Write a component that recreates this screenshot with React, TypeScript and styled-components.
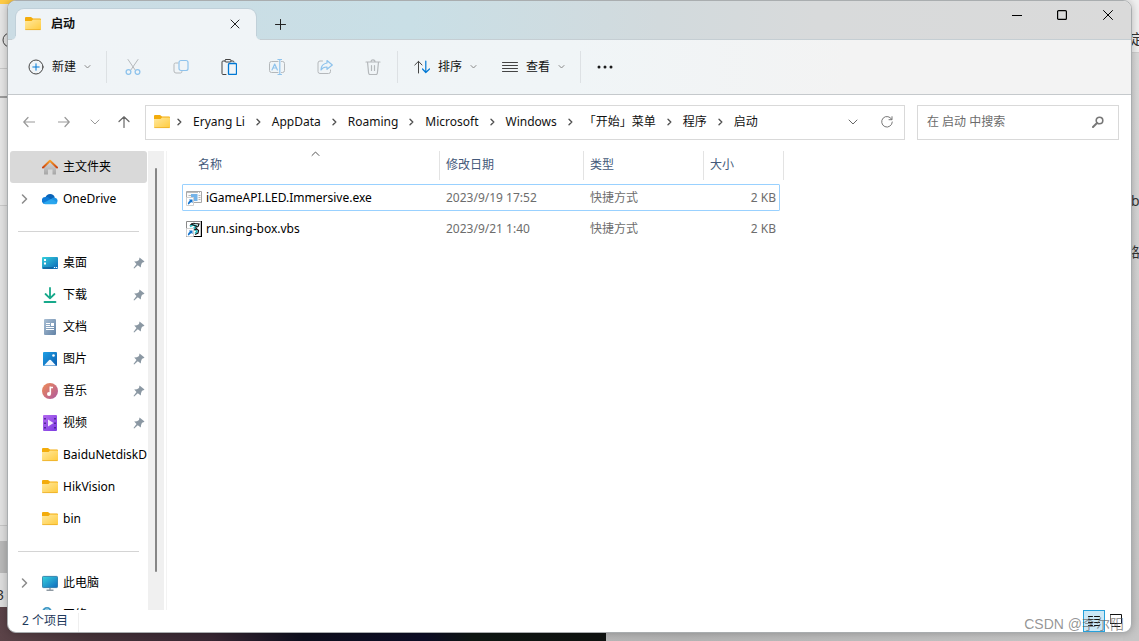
import React from "react";
import styled, { createGlobalStyle, css } from "styled-components";

const GlobalStyle = createGlobalStyle`
  * { box-sizing: border-box; }
  html, body { margin: 0; padding: 0; height: 100%; overflow: hidden; }
  body, button, input, table {
    font-family: "Noto Sans", "Noto Sans CJK SC", sans-serif;
    font-size: 12px;
    line-height: 16px;
    color: #111;
  }
  button { margin: 0; padding: 0; border: 0; background: none; white-space: nowrap; }
  a { color: inherit; text-decoration: none; }
  svg { display: block; flex: none; }
`;

/* ---------- desktop behind the window ---------- */

const Desktop = styled.div`
  position: relative;
  height: 100vh;
  padding: 0 7px 8px;
  overflow: hidden;
  background: linear-gradient(90deg, #c4c4c4, #b4b4b4 60%, #c9c9c9);
`;

const LeftBackdrop = styled.div`
  position: absolute;
  left: 0;
  top: 0;
  width: 16px;
  height: 607px;
  background: linear-gradient(#ffcb45 0 4px, #e6e6e6 4px 68px, #c9c9c9 68px 69px, #e6e6e6 69px 205px, #cacaca 205px 206px, #e2e2e2 206px 525px, #c6c6c6 525px 526px, #dedede 526px 541px, #b9b9b9 541px 573px, #dedede 573px);
  overflow: hidden;
`;

const Wallpaper = styled.div`
  position: absolute;
  left: 0;
  bottom: 0;
  width: 606px;
  height: 34px;
  background: linear-gradient(90deg, #5b4348, #463339 15%, #382733 35%, #0e0f1e 50%, #0d0d26 70%, #0f1713 78%, #101311);
`;

const RightBackdrop = styled.div`
  position: absolute;
  right: 0;
  top: 0;
  width: 16px;
  height: 100%;
  background: linear-gradient(#f1f1f1 0 52px, #cfcfcf 52px 53px, #dadada 53px, #c6c6c6);
  overflow: hidden;
`;

const BackdropItem = styled.span<{ $top: number; $left: number }>`
  position: absolute;
  top: ${(p) => p.$top}px;
  left: ${(p) => p.$left}px;
  color: #333;
  font-size: 14px;
`;

/* ---------- window ---------- */

const Window = styled.main`
  position: relative;
  display: flex;
  flex-direction: column;
  height: 100%;
  border: 1px solid #a9adaf;
  border-radius: 9px;
  background: #fff;
  overflow: hidden;
  box-shadow: 0 0 8px rgba(0, 0, 0, 0.25);
`;

const TitleBar = styled.header`
  display: flex;
  align-items: flex-start;
  flex: none;
  height: 39px;
  padding-left: 8px;
  background: linear-gradient(90deg, #cbdce4, #c9dfe6 36%, #d2dadd 58%, #d8dadb 72%, #dadada);
  box-shadow: inset 0 -1px #c5ced3;
`;

const Tab = styled.div`
  position: relative;
  display: flex;
  align-items: center;
  width: 240px;
  height: 31px;
  margin-top: 8px;
  padding: 0 12px 2px 9px;
  gap: 10px;
  border-radius: 8px 8px 0 0;
  background: #f0f4f7;
  box-shadow: 0 0 0 1px #c0d0d9;
  clip-path: inset(-1px -5px 0 -5px);
  font-weight: 600;

  &::before,
  &::after {
    content: "";
    position: absolute;
    bottom: 0;
    width: 4px;
    height: 4px;
  }
  &::before {
    left: -4px;
    background: radial-gradient(circle at 0 0, transparent 3px, #f0f4f7 4px);
  }
  &::after {
    right: -4px;
    background: radial-gradient(circle at 100% 0, transparent 3px, #f0f4f7 4px);
  }
`;

const TabTitle = styled.span`
  flex: 1;
`;

const IconButton = styled.button<{ $w: number; $h: number }>`
  display: flex;
  align-items: center;
  justify-content: center;
  flex: none;
  width: ${(p) => p.$w}px;
  height: ${(p) => p.$h}px;
`;

const NewTab = styled.div`
  flex: 1;
  padding: 7px 0 0 8px;
`;

const Caption = styled.div`
  display: flex;
`;

const CommandBar = styled.div`
  display: flex;
  align-items: center;
  flex: none;
  height: 55px;
  padding-left: 10px;
  border-bottom: 1px solid #c5c9cc;
  background: linear-gradient(90deg, #f0f4f7, #f0f5f7 50%, #f3f3f3 75%);
`;

const Command = styled.button`
  display: flex;
  align-items: center;
  height: 32px;
  padding: 0 15px 0 10px;
  gap: 8px;
`;

const Divider = styled.span<{ $gap?: number }>`
  width: 1px;
  height: 32px;
  margin-right: ${(p) => p.$gap ?? 0}px;
  background: #dde1e4;
`;

/* ---------- navigation row ---------- */

const NavRow = styled.nav`
  display: flex;
  align-items: center;
  flex: none;
  height: 56px;
  padding: 0 12px 2px 4px;
`;

const NavButtons = styled.div`
  display: flex;
  gap: 1px;
  width: 133px;
`;

const box = css`
  display: flex;
  align-items: center;
  height: 35px;
  border: 1px solid #d9d9d9;
  background: #fff;
`;

const AddressBar = styled.div`
  ${box}
  flex: 1;
  min-width: 0;
  padding-left: 8px;
`;

const Crumbs = styled.ol`
  display: flex;
  flex: 1;
  min-width: 0;
  margin: 0;
  padding: 0;
  list-style: none;
  white-space: nowrap;
`;

const Crumb = styled.li`
  display: flex;
  align-items: center;
  svg { margin: 0 10px; }
  &:first-child svg { margin-left: 6px; }
`;

const SearchBox = styled.label`
  ${box}
  width: 202px;
  margin-left: 12px;
  padding: 0 14px 0 9px;
`;

const SearchInput = styled.input`
  flex: 1;
  min-width: 0;
  padding: 0;
  border: 0;
  outline: 0;
  background: none;
  &::placeholder { color: #6b6b6b; opacity: 1; }
`;

/* ---------- body ---------- */

const Body = styled.div`
  display: flex;
  flex: 1;
  min-height: 0;
`;

const SideBar = styled.aside`
  flex: none;
  width: 140px;
  padding: 0 1px 0 2px;
  overflow: hidden;
`;

const SideItem = styled.a<{ $active?: boolean }>`
  display: flex;
  align-items: center;
  height: 32px;
  padding-left: 11px;
  border-radius: 3px;
  background: ${(p) => (p.$active ? "#d9d9d9" : "transparent")};
  color: #000;
  overflow: hidden;
  white-space: nowrap;
`;

const Expander = styled.span`
  flex: none;
  width: 21px;
`;

const SideLabel = styled.span`
  flex: 1;
  min-width: 0;
  margin-left: 5px;
  overflow: hidden;
`;

const PinSlot = styled.span`
  flex: none;
  width: 14px;
`;

const SideRule = styled.hr`
  height: 1px;
  margin: 16px 8px 15px;
  border: 0;
  background: #d4d4d4;
`;

const ScrollTrack = styled.div`
  display: flex;
  justify-content: center;
  flex: none;
  width: 16px;
  padding: 17px 0 38px;
  background: #f0f0f0;
`;

const ScrollThumb = styled.div`
  width: 2px;
  border-radius: 1px;
  background: #868686;
`;

const FilePane = styled.section`
  flex: 1;
  margin-left: 2px;
  padding-left: 15px;
  border-left: 1px solid #f3f3f3;
  overflow: hidden;
`;

const FileTable = styled.table`
  width: 602px;
  table-layout: fixed;
  border-collapse: separate;
  border-spacing: 0 4px;
  margin-top: -4px;
`;

const HeadCell = styled.th<{ $w: number; $pad?: number }>`
  position: relative;
  width: ${(p) => p.$w}px;
  height: 29px;
  padding: 0 0 2px ${(p) => p.$pad ?? 6}px;
  border-right: 1px solid #e3e3e3;
  color: #44597a;
  font-weight: 400;
  text-align: left;
`;

const SortMark = styled.span`
  position: absolute;
  top: 0;
  left: 129px;
`;

const FileRow = styled.tr<{ $selected?: boolean }>`
  position: relative;
  ${(p) =>
    p.$selected &&
    css`
      &::after {
        content: "";
        position: absolute;
        inset: 0 4px 0 0;
        border: 1px solid #99d1ff;
        border-radius: 1px;
        pointer-events: none;
      }
    `}
`;

const Cell = styled.td<{ $right?: boolean }>`
  height: 27px;
  padding: 0 ${(p) => (p.$right ? 8 : 0)}px 0 6px;
  color: #6d6d6d;
  text-align: ${(p) => (p.$right ? "right" : "left")};
`;

const FileName = styled.span`
  display: flex;
  align-items: center;
  gap: 4px;
  margin-left: -2px;
  color: #000;
`;

/* ---------- status bar ---------- */

const StatusBar = styled.footer`
  display: flex;
  align-items: flex-end;
  flex: none;
  height: 22px;
  padding: 0 4px 0 14px;
  color: #1e395b;
`;

const Count = styled.span`
  padding: 0 10px 3px 0;
  border-right: 1px solid #efefef;
  margin-right: auto;
`;

const ViewButton = styled.button<{ $on?: boolean }>`
  display: flex;
  align-items: center;
  justify-content: center;
  width: 22px;
  height: 22px;
  border: 1px solid ${(p) => (p.$on ? "#26a0da" : "transparent")};
  background: ${(p) => (p.$on ? "#cbe8f6" : "transparent")};
`;

const Watermark = styled.span`
  position: absolute;
  right: 15px;
  bottom: 9px;
  color: rgba(90, 90, 90, 0.65);
  font-family: "Liberation Sans", "Noto Sans CJK SC", sans-serif;
  font-size: 14px;
  pointer-events: none;
`;

/* ---------- icons ---------- */

type LineProps = {
  w?: number;
  h?: number;
  color?: string;
  stroke?: number;
  children: React.ReactNode;
};

const Line = ({ w = 16, h = 16, color = "#444", stroke = 1, children }: LineProps) => (
  <svg width={w} height={h} viewBox={`0 0 ${w} ${h}`} fill="none" stroke={color} strokeWidth={stroke} strokeLinecap="round" strokeLinejoin="round" aria-hidden="true">
    {children}
  </svg>
);

const GREY = "#b4b8bb";
const PALE = "#8fc3ec";
const BLUE = "#0078d4";

const ChevronDown = ({ color = "#888" }: { color?: string }) => (
  <Line w={7} h={6} color={color}><path d="M1 1.5 3.5 4 6 1.5" /></Line>
);
const ChevronWide = ({ color = "#666" }: { color?: string }) => (
  <Line w={10} h={6} color={color}><path d="M1 1 5 5 9 1" /></Line>
);
const ChevronRight = ({ color = "#555" }: { color?: string }) => (
  <Line w={7} h={10} color={color} stroke={1.4}><path d="M2 2.2 4.8 5 2 7.8" /></Line>
);
const ChevronSide = () => (
  <Line w={7} h={10} color="#8a8a8a" stroke={1.5}><path d="M1.5 1 5.5 5l-4 4" /></Line>
);

const FolderIcon = () => (
  <svg width="16" height="16" viewBox="0 0 16 16" aria-hidden="true">
    <defs>
      <linearGradient id="folder" x1="0" y1="0" x2="1" y2="1">
        <stop offset="0" stopColor="#ffe9a0" />
        <stop offset="1" stopColor="#ffcb3d" />
      </linearGradient>
    </defs>
    <path d="M0 2Q0 1 1 1H6L8 2.500H15Q16 2.500 16 3.500V8H0Z" fill="#f3ac0c" />
    <path d="M0 5H6.500L8 3.500H15.500L16 4V13Q16 14 15 14H1Q0 14 0 13Z" fill="url(#folder)" />
    <path d="M.3 13.600H15.700" stroke="#e9a91d" strokeWidth=".7" />
  </svg>
);
const HomeIcon = () => (
  <svg width="16" height="16" viewBox="0 0 16 16" aria-hidden="true">
    <defs>
      <linearGradient id="wall" x1="0" y1="0" x2="0" y2="1">
        <stop offset="0" stopColor="#d8d8d8" />
        <stop offset="1" stopColor="#a6a6a6" />
      </linearGradient>
      <linearGradient id="roof" x1="0" y1="0" x2="0" y2="1">
        <stop offset="0" stopColor="#f6a12c" />
        <stop offset="1" stopColor="#cc4410" />
      </linearGradient>
    </defs>
    <path d="M2 7.5 8 2l6 5.500V15Q14 15.500 13.500 15.500H10.500V10.500H6V15.500H2.500Q2 15.500 2 15Z" fill="url(#wall)" />
    <path d="M1 8.500 8 1.800l7 6.700" fill="none" stroke="url(#roof)" strokeWidth="2" strokeLinecap="round" strokeLinejoin="round" />
  </svg>
);
const CloudIcon = () => (
  <svg width="16" height="16" viewBox="0 0 16 16" aria-hidden="true">
    <path d="M3.500 6.500A4.800 4.800 0 0 1 12.800 6.500L8 10Z" fill="#0a64b8" />
    <path d="M3.500 13A3.500 3.500 0 0 1 3.200 6Q5 5.500 6.500 6.500L13 12Z" fill="#0f7ad6" />
    <path d="M9 8.200Q10.500 6 13 6.700A3.200 3.200 0 0 1 13 13Z" fill="#1b93e4" />
    <path d="M1.200 12 9 8Q12 8.500 15.300 11.700 14.500 13.200 12.800 13.200H3.500Q2 13.200 1.200 12Z" fill="#2aa6ee" />
  </svg>
);
const DesktopIcon = () => (
  <svg width="16" height="16" viewBox="0 0 16 16" aria-hidden="true">
    <defs>
      <linearGradient id="screen" x1="0" y1="0" x2="1" y2="1">
        <stop offset="0" stopColor="#35d0dc" />
        <stop offset="1" stopColor="#0b66b8" />
      </linearGradient>
    </defs>
    <rect y="2" width="16" height="12" rx="1" fill="url(#screen)" />
    <path d="M2 4h2v2H2zM2 7.500h2v2H2z" fill="#fff" />
    <path d="M1 13h10" stroke="#0a4a86" />
    <path d="M12 12.500h1.200M14 12.500h1.200" stroke="#fff" />
  </svg>
);
const DownloadIcon = () => (
  <Line color="#17a98b" stroke={1.800}><path d="M8 1v10M3.500 7 8 11.300 12.500 7M2.500 15H13.500" /></Line>
);
const DocIcon = () => (
  <svg width="16" height="16" viewBox="0 0 16 16" aria-hidden="true">
    <defs>
      <linearGradient id="doc" x1="0" y1="0" x2="1" y2="1">
        <stop offset="0" stopColor="#a9bfd4" />
        <stop offset="1" stopColor="#6282a6" />
      </linearGradient>
    </defs>
    <rect x="2" width="12" height="16" rx="1" fill="url(#doc)" />
    <path d="M4 4.500h4M4 6.500h4M4 8.500h8M4 10.500h8" stroke="#fff" />
    <rect x="9" y="4" width="3" height="3" fill="#fff" />
  </svg>
);
const PictureIcon = () => (
  <svg width="16" height="16" viewBox="0 0 16 16" aria-hidden="true">
    <defs>
      <linearGradient id="pic" x1="0" y1="0" x2="1" y2="1">
        <stop offset="0" stopColor="#1ea0e6" />
        <stop offset="1" stopColor="#0a5cae" />
      </linearGradient>
    </defs>
    <rect x="1" y="1" width="14" height="14" rx="1" fill="url(#pic)" />
    <path d="M2 14.500 7.200 9Q8 8.300 8.800 9L14 14.500Z" fill="#f4faff" />
    <circle cx="11.500" cy="4.500" r="1.300" fill="#fff" />
  </svg>
);
const MusicIcon = () => (
  <svg width="16" height="16" viewBox="0 0 16 16" aria-hidden="true">
    <defs>
      <linearGradient id="music" x1="0" y1="0" x2="1" y2="1">
        <stop offset="0" stopColor="#f08c54" />
        <stop offset="1" stopColor="#ad58a0" />
      </linearGradient>
    </defs>
    <circle cx="8" cy="8" r="8" fill="url(#music)" />
    <circle cx="7" cy="11" r="2" fill="#fff" />
    <path d="M8.300 11V3.500M8 4.500H11" stroke="#fff" strokeWidth="1.600" />
  </svg>
);
const VideoIcon = () => (
  <svg width="16" height="16" viewBox="0 0 16 16" aria-hidden="true">
    <defs>
      <linearGradient id="video" x1="0" y1="0" x2="1" y2="1">
        <stop offset="0" stopColor="#b56af0" />
        <stop offset="1" stopColor="#7a3be0" />
      </linearGradient>
    </defs>
    <rect x="1" width="14" height="16" rx="1" fill="url(#video)" />
    <path d="M3 3v12M13 3v12" stroke="#3d1b80" strokeWidth="1.500" strokeDasharray="1.500 3" />
    <path d="M6 4.500 11.500 8 6 11.500Z" fill="#f2eafc" />
  </svg>
);
const PcIcon = () => (
  <svg width="16" height="16" viewBox="0 0 16 16" aria-hidden="true">
    <defs>
      <linearGradient id="pc" x1="0" y1="0" x2="1" y2="1">
        <stop offset="0" stopColor="#36d3de" />
        <stop offset="1" stopColor="#1069bd" />
      </linearGradient>
    </defs>
    <rect x=".4" y="1.400" width="15.200" height="11.200" rx="1" fill="url(#pc)" stroke="#1d6f9e" strokeWidth=".8" />
    <path d="M8 13v2M4.500 15.300h7" stroke="#8f9aa3" strokeWidth="1.400" />
  </svg>
);
const NetworkIcon = () => (
  <svg width="16" height="16" viewBox="0 0 16 16" aria-hidden="true">
    <circle cx="5" cy="5" r="5" fill="#3f97c4" />
    <path d="M2 4q3-4 6 0" stroke="#bfe6f5" fill="none" />
    <rect x="4" y="7" width="12" height="8" fill="#2a9fd6" />
  </svg>
);
const PinIcon = () => (
  <svg width="12" height="12" viewBox="0 0 12 12" aria-hidden="true">
    <path d="M6.500.5 11.500 4.500 10 5.500 9 5.800 8 8.300 7.800 10.500 4.800 8.300 1.200 11.600.5 11 3.500 7 1.200 4.500 4 4.300 6 3Z" fill="#8b98a3" />
  </svg>
);
const ExeIcon = () => (
  <svg width="16" height="16" viewBox="0 0 16 16" aria-hidden="true">
    <path d="M.5 1.500h15v11H.5z" fill="#fafafa" stroke="#a8a8a8" />
    <path d="M1 2.500h14" stroke="#bdbdbd" />
    <path d="M12 2.500h1M14 2.500h1" stroke="#fff" />
    <path d="M2.500 5.500h3M12.500 5.500h2M12.500 7.500h2M12.500 9.500h2" stroke="#b6b6b6" />
    <rect x="5" y="4" width="6.500" height="7" fill="#75b3e8" />
    <path d="M.5 7.500h7v8h-7z" fill="#fff" stroke="#d0d0d0" />
    <path d="M1.800 14Q2 11.500 3.800 10.700L3 9.500H6.500v3.700L5.300 12 2.600 14.400Z" fill="#1272cc" />
  </svg>
);
const VbsIcon = () => (
  <svg width="16" height="16" viewBox="0 0 16 16" aria-hidden="true">
    <path d="M.5.500h14.500v15H.5z" fill="#fff" stroke="#8a8a8a" />
    <path d="M15.500 0v16M0 15.500h16" stroke="#000" />
    <path d="M4 4.500Q6 1.500 9 2.500L13 3 12 5.500 9 6.500 12.500 9.500 12 12 9 13.500" fill="none" stroke="#111" strokeWidth="1.200" />
    <path d="M4 5.500 7 4 10 4.500 8 7 11 10.500 9 12.500" fill="none" stroke="#27bfc4" strokeWidth="1.500" />
    <path d="M5 3 11 5.500M8 9 11 8" stroke="#111" strokeWidth="1.200" />
    <path d="M.5 7.500h7v8h-7z" fill="#fff" stroke="#d0d0d0" />
    <path d="M1.800 14Q2 11.500 3.800 10.700L3 9.500H6.500v3.700L5.300 12 2.600 14.400Z" fill="#1272cc" />
  </svg>
);

/* ---------- data ---------- */

const crumbs = ["Eryang Li", "AppData", "Roaming", "Microsoft", "Windows", "「开始」菜单", "程序", "启动"];

const pinned: [string, () => React.JSX.Element][] = [
  ["桌面", DesktopIcon],
  ["下载", DownloadIcon],
  ["文档", DocIcon],
  ["图片", PictureIcon],
  ["音乐", MusicIcon],
  ["视频", VideoIcon],
];

const files = [
  { name: "iGameAPI.LED.Immersive.exe", date: "2023/9/19 17:52", type: "快捷方式", size: "2 KB", Icon: ExeIcon },
  { name: "run.sing-box.vbs", date: "2023/9/21 1:40", type: "快捷方式", size: "2 KB", Icon: VbsIcon },
];

type SideEntryProps = {
  label: string;
  icon: () => React.JSX.Element;
  active?: boolean;
  expandable?: boolean;
  pinned?: boolean;
};

const SideEntry = ({ label, icon: Icon, active, expandable, pinned: isPinned }: SideEntryProps) => (
  <SideItem href="#" $active={active}>
    <Expander>{expandable && <ChevronSide />}</Expander>
    <Icon />
    <SideLabel>{label}</SideLabel>
    {isPinned && <PinSlot><PinIcon /></PinSlot>}
  </SideItem>
);

export default function App() {
  return (
    <Desktop>
      <GlobalStyle />
      <LeftBackdrop>
        <BackdropItem $top={32} $left={2}>
          <Line><circle cx="8" cy="8" r="7" /></Line>
        </BackdropItem>
        <BackdropItem $top={89} $left={-5}>
          <Line color="#555"><path d="M0 8H13M4 3.500 0 8 4 12.500" /></Line>
        </BackdropItem>
        <BackdropItem $top={587} $left={-4}>3</BackdropItem>
      </LeftBackdrop>
      <Wallpaper />
      <RightBackdrop>
        <BackdropItem $top={31} $left={7}>定</BackdropItem>
        <BackdropItem $top={193} $left={8}>b</BackdropItem>
        <BackdropItem $top={244} $left={3}>路</BackdropItem>
      </RightBackdrop>

      <Window>
        <TitleBar>
          <Tab>
            <FolderIcon />
            <TabTitle>启动</TabTitle>
            <IconButton $w={18} $h={24} aria-label="关闭标签页">
              <Line w={10} h={10} color="#222"><path d="M1 1l8 8M9 1 1 9" /></Line>
            </IconButton>
          </Tab>
          <NewTab>
            <IconButton $w={32} $h={32} aria-label="新建标签页">
              <Line w={11} h={11} color="#222"><path d="M5.500.5v10M.5 5.500h10" /></Line>
            </IconButton>
          </NewTab>
          <Caption>
            <IconButton $w={45} $h={28} aria-label="最小化">
              <Line w={10} h={10} color="#000"><path d="M0 5.500h10" /></Line>
            </IconButton>
            <IconButton $w={46} $h={28} aria-label="最大化">
              <Line w={10} h={10} color="#000" stroke={1.200}><rect x=".6" y=".6" width="8.800" height="8.800" rx="1" /></Line>
            </IconButton>
            <IconButton $w={46} $h={28} aria-label="关闭">
              <Line w={10} h={10} color="#000"><path d="M.5.500l9 9M9.500.5l-9 9" /></Line>
            </IconButton>
          </Caption>
        </TitleBar>

        <CommandBar>
          <Command>
            <Line><circle cx="8" cy="8" r="7" /><path d="M8 4.800v6.400M4.800 8h6.400" stroke={BLUE} /></Line>
            新建
            <ChevronDown />
          </Command>
          <Divider $gap={2} />
          <IconButton $w={48} $h={32} aria-label="剪切">
            <Line color={GREY}>
              <path d="M3 .5 10.500 11.500M13 .5 5.500 11.500" />
              <g stroke={PALE} strokeWidth="1.300"><circle cx="3.500" cy="13" r="2.400" /><circle cx="12.500" cy="13" r="2.400" /></g>
            </Line>
          </IconButton>
          <IconButton $w={48} $h={32} aria-label="复制">
            <Line color={GREY}>
              <path d="M5 4H2.500Q1 4 1 5.500V12Q1 14 3 14H7.500Q9 14 9 12.500" />
              <rect x="6" y="1.500" width="9" height="10" rx="2" stroke={PALE} strokeWidth="1.200" />
            </Line>
          </IconButton>
          <IconButton $w={48} $h={32} aria-label="粘贴">
            <Line>
              <path d="M5 15.500H2Q1 15.500 1 14.500V3Q1 2 2 2H4M10 2H12Q13 2 13 3" />
              <rect x="4" y=".5" width="6" height="2.500" rx="1" />
              <rect x="7.500" y="4.500" width="8" height="11" rx="1" stroke={BLUE} strokeWidth="1.300" />
            </Line>
          </IconButton>
          <IconButton $w={48} $h={32} aria-label="重命名">
            <Line color={GREY}>
              <path d="M9 2.500H2.500Q.5 2.500.5 4.500V11.500Q.5 13.500 2.500 13.500H9M12.500 2.500H13.500Q15.500 2.500 15.500 4.500V11.500Q15.500 13.500 13.500 13.500H12.500" />
              <path d="M3 11 5.700 5 8.400 11M4 9H7.500M10.800.5V15.500M9 .5H12.500M9 15.500H12.500" stroke={PALE} strokeWidth="1.200" />
            </Line>
          </IconButton>
          <IconButton $w={48} $h={32} aria-label="共享">
            <Line color={GREY}>
              <path d="M5.500 2H3Q1 2 1 4V12.500Q1 14.500 3 14.500H11.500Q13.500 14.500 13.500 12.500V11" />
              <path d="M10 1.500 15.300 6 10 10.300V8Q6 7.800 4 11 4 5 10 4Z" stroke={PALE} strokeWidth="1.200" />
            </Line>
          </IconButton>
          <IconButton $w={48} $h={32} aria-label="删除">
            <Line color={GREY} stroke={1.200}><path d="M1 3H15M2.500 3 3.600 14Q3.800 15.500 5 15.500H11Q12.200 15.500 12.400 14L13.500 3M6 3Q6 .8 8 .8T10 3M6.500 6.500V11.500M9.500 6.500V11.500" /></Line>
          </IconButton>
          <Divider $gap={6} />
          <Command>
            <Line>
              <path d="M4.500 14V2.500M.8 6 4.500 2.300 8 6" />
              <path d="M11.800 2V13.500M8.500 10 11.800 13.500 15.500 10" stroke={BLUE} strokeWidth="1.200" />
            </Line>
            排序
            <ChevronDown />
          </Command>
          <Command>
            <Line><path d="M.5 3.500h15M.5 6.500h15M.5 9.500h15M.5 12.500h15" /></Line>
            查看
            <ChevronDown />
          </Command>
          <Divider $gap={6} />
          <IconButton $w={36} $h={32} aria-label="更多">
            <svg width="16" height="4" viewBox="0 0 16 4" fill="#1a1a1a" aria-hidden="true">
              <circle cx="2" cy="2" r="1.500" /><circle cx="8" cy="2" r="1.500" /><circle cx="14" cy="2" r="1.500" />
            </svg>
          </IconButton>
        </CommandBar>

        <NavRow>
          <NavButtons>
            <IconButton $w={34} $h={32} aria-label="后退">
              <Line w={12} h={12} color="#999" stroke={1.200}><path d="M11.500 6H.8M5 1.500.8 6 5 10.500" /></Line>
            </IconButton>
            <IconButton $w={34} $h={32} aria-label="前进">
              <Line w={12} h={12} color="#999" stroke={1.200}><path d="M.5 6H11.200M7 1.500 11.200 6 7 10.500" /></Line>
            </IconButton>
            <IconButton $w={25} $h={32} aria-label="最近的位置"><ChevronWide color="#999" /></IconButton>
            <IconButton $w={32} $h={32} aria-label="上移">
              <Line w={12} h={12} color="#666" stroke={1.200}><path d="M6 11.500V.8M1 5.500 6 .8 11 5.500" /></Line>
            </IconButton>
          </NavButtons>
          <AddressBar>
            <FolderIcon />
            <Crumbs>
              {crumbs.map((c) => (
                <Crumb key={c}><ChevronRight /><a href="#">{c}</a></Crumb>
              ))}
            </Crumbs>
            <IconButton $w={34} $h={33} aria-label="以前的位置"><ChevronWide /></IconButton>
            <IconButton $w={34} $h={33} aria-label="刷新">
              <Line w={12} h={12} color="#777"><path d="M10.800 3.500A5.300 5.300 0 1 0 11.300 6M11 .7V3.700H8" /></Line>
            </IconButton>
          </AddressBar>
          <SearchBox>
            <SearchInput type="text" placeholder="在 启动 中搜索" aria-label="在 启动 中搜索" />
            <Line w={12} h={12} color="#777" stroke={1.600}><circle cx="7.500" cy="4.500" r="3.300" /><path d="M5 7 1 11" strokeWidth="2" /></Line>
          </SearchBox>
        </NavRow>

        <Body>
          <SideBar>
            <SideEntry label="主文件夹" icon={HomeIcon} active />
            <SideEntry label="OneDrive" icon={CloudIcon} expandable />
            <SideRule />
            {pinned.map(([label, icon]) => (
              <SideEntry key={label} label={label} icon={icon} pinned />
            ))}
            <SideEntry label="BaiduNetdiskDownload" icon={FolderIcon} />
            <SideEntry label="HikVision" icon={FolderIcon} />
            <SideEntry label="bin" icon={FolderIcon} />
            <SideRule />
            <SideEntry label="此电脑" icon={PcIcon} expandable />
            <SideEntry label="网络" icon={NetworkIcon} />
          </SideBar>
          <ScrollTrack><ScrollThumb /></ScrollTrack>
          <FilePane>
            <FileTable>
              <thead>
                <tr>
                  <HeadCell $w={258} $pad={16}>
                    名称
                    <SortMark><Line w={9} h={6} color="#555"><path d="M1 4.500 4.500 1 8 4.500" /></Line></SortMark>
                  </HeadCell>
                  <HeadCell $w={144}>修改日期</HeadCell>
                  <HeadCell $w={120}>类型</HeadCell>
                  <HeadCell $w={80}>大小</HeadCell>
                </tr>
              </thead>
              <tbody>
                {files.map(({ name, date, type, size, Icon }, i) => (
                  <FileRow key={name} $selected={i === 0}>
                    <Cell><FileName><Icon />{name}</FileName></Cell>
                    <Cell>{date}</Cell>
                    <Cell>{type}</Cell>
                    <Cell $right>{size}</Cell>
                  </FileRow>
                ))}
              </tbody>
            </FileTable>
          </FilePane>
        </Body>

        <StatusBar>
          <Count>2 个项目</Count>
          <ViewButton $on aria-label="详细信息">
            <Line w={12} h={12} color="#111"><path d="M.5 1.500h4M6.500 1.500h5M.5 4.500h4M6.500 4.500h5M.5 7.500h4M6.500 7.500h5M.5 10.500h4M6.500 10.500h5" /></Line>
          </ViewButton>
          <ViewButton aria-label="大图标">
            <Line w={12} h={14} color="#111"><path d="M.5.500h11v9H.5zM2 12.500h8" /></Line>
          </ViewButton>
        </StatusBar>
      </Window>
      <Watermark>CSDN @李尔阳</Watermark>
    </Desktop>
  );
}
